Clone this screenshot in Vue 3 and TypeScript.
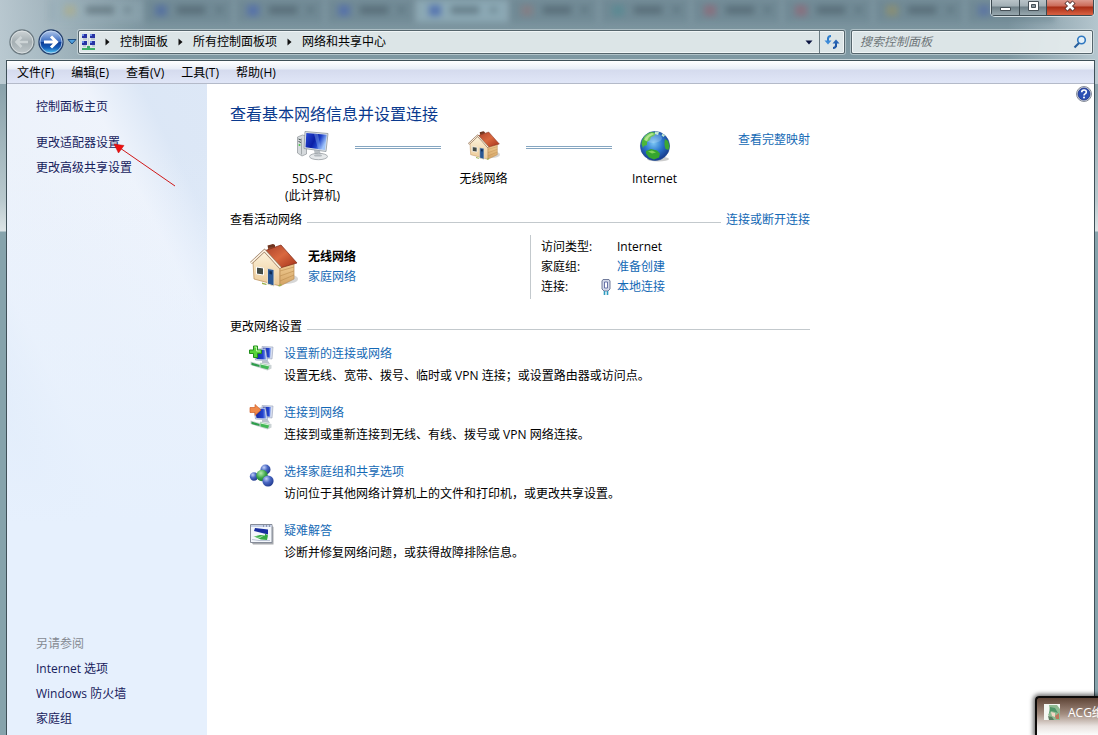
<script setup lang="ts">
interface Task {
  icon: string
  title: string
  text: string
}

const crumbs: string[] = ['控制面板', '所有控制面板项', '网络和共享中心']
const menus: string[] = ['文件(F)', '编辑(E)', '查看(V)', '工具(T)', '帮助(H)']
const related: string[] = ['Internet 选项', 'Windows 防火墙', '家庭组']
const tabTints: string[] = ['#b3ae82', '#4563a8', '#4563b8', '#4563b8', '#2f4fae', '#94797a', '#4f8a92', '#9b5e70', '#9b5e70', '#9a9360', '#5069ab']
const activeTab = 4

const tasks: Task[] = [
  { icon: 'i-new', title: '设置新的连接或网络', text: '设置无线、宽带、拨号、临时或 VPN 连接；或设置路由器或访问点。' },
  { icon: 'i-connect', title: '连接到网络', text: '连接到或重新连接到无线、有线、拨号或 VPN 网络连接。' },
  { icon: 'i-group', title: '选择家庭组和共享选项', text: '访问位于其他网络计算机上的文件和打印机，或更改共享设置。' },
  { icon: 'i-fix', title: '疑难解答', text: '诊断并修复网络问题，或获得故障排除信息。' },
]
</script>

<template>
  <div class="window">
    <svg class="defs" width="0" height="0" aria-hidden="true">
      <defs>
        <linearGradient id="g-roof" x1="0" y1="0" x2="1" y2="1">
          <stop offset="0" stop-color="#a8402a" />
          <stop offset="0.5" stop-color="#d9683f" />
          <stop offset="1" stop-color="#a33018" />
        </linearGradient>
        <linearGradient id="g-wall" x1="0" y1="0" x2="0" y2="1">
          <stop offset="0" stop-color="#fdf4de" />
          <stop offset="1" stop-color="#ecc995" />
        </linearGradient>
        <linearGradient id="g-side" x1="0" y1="0" x2="0" y2="1">
          <stop offset="0" stop-color="#f2cf96" />
          <stop offset="1" stop-color="#d3a263" />
        </linearGradient>
        <linearGradient id="g-screen" x1="0" y1="0" x2="1" y2="0.4">
          <stop offset="0" stop-color="#2a4ad6" />
          <stop offset="0.5" stop-color="#0b1fa6" />
          <stop offset="0.7" stop-color="#1e41c8" />
          <stop offset="1" stop-color="#9fc4fa" />
        </linearGradient>
        <linearGradient id="g-mini" x1="0" y1="0" x2="1" y2="0">
          <stop offset="0" stop-color="#14249a" />
          <stop offset="0.7" stop-color="#2443cf" />
          <stop offset="1" stop-color="#9fb8f2" />
        </linearGradient>
        <radialGradient id="g-sea" cx="0.45" cy="0.4" r="0.6">
          <stop offset="0" stop-color="#7cc6f4" />
          <stop offset="0.5" stop-color="#2d79cf" />
          <stop offset="1" stop-color="#173a8c" />
        </radialGradient>
        <radialGradient id="g-blue" cx="0.35" cy="0.3" r="0.7">
          <stop offset="0" stop-color="#c3d3f8" />
          <stop offset="0.5" stop-color="#4a68c4" />
          <stop offset="1" stop-color="#243e92" />
        </radialGradient>
        <radialGradient id="g-green" cx="0.4" cy="0.3" r="0.7">
          <stop offset="0" stop-color="#b9efb0" />
          <stop offset="0.6" stop-color="#3ba547" />
          <stop offset="1" stop-color="#1c7a33" />
        </radialGradient>
        <linearGradient id="g-back" x1="0" y1="0" x2="0" y2="1">
          <stop offset="0" stop-color="#d0d6d8" />
          <stop offset="0.5" stop-color="#a4aeb2" />
          <stop offset="1" stop-color="#c0c8cb" />
        </linearGradient>
        <linearGradient id="g-fwd" x1="0" y1="0" x2="0" y2="1">
          <stop offset="0" stop-color="#b9cdee" />
          <stop offset="0.48" stop-color="#3a6cc0" />
          <stop offset="0.5" stop-color="#0d3a93" />
          <stop offset="0.75" stop-color="#1560bb" />
          <stop offset="1" stop-color="#5fd8fb" />
        </linearGradient>
      </defs>

      <symbol id="i-house" viewBox="0 0 48 46">
        <ellipse cx="36" cy="36" rx="12" ry="5" fill="#000" opacity="0.16" />
        <path d="M18 3l5-1.500 2 1v8h-7z" fill="#9c5430" />
        <path d="M17.500 2.500l5.500-1.500 2 1v2l-7 1z" fill="#6e3521" />
        <path d="M3 19L15 8l15 16v19L4 36z" fill="url(#g-wall)" stroke="#b98d57" stroke-width="0.700" />
        <path d="M30 23l14-4v17l-14 7z" fill="url(#g-side)" stroke="#b98d57" stroke-width="0.700" />
        <path d="M30 28l14-4M30 33l14-5M30 38l14-6" stroke="#bb8c4e" stroke-width="0.600" />
        <path d="M14 8l17-6 16 18-17 5z" fill="url(#g-roof)" stroke="#7e2817" stroke-width="0.700" />
        <path d="M1 20L14.500 7.500 30.500 25" fill="none" stroke="#9c7d62" stroke-width="2.800" />
        <path d="M1 20L14.500 7.500 30.500 25" fill="none" stroke="#fff6e6" stroke-width="1.500" />
        <path d="M6.500 24l7 1v7l-7-1z" fill="#444b45" stroke="#fff" stroke-width="1" />
        <path d="M17.500 25.500l6.500 1V43l-6.500-2z" fill="#2a5794" stroke="#e9dcc3" stroke-width="1" />
        <path d="M19.500 28l2.500.4v3l-2.500-.4z" fill="#0f2c55" />
        <path d="M12 39.500l5 1.500-1 1-4-1zM28 42.500l3-1.500 1 1-3 1.500z" fill="#9bb14a" />
      </symbol>

      <symbol id="i-pc" viewBox="0 0 32 30">
        <path d="M0.500 6l5-2 4 1v18l-4.500 2-4.500-3z" fill="#d6dadd" stroke="#8e9498" stroke-width="0.700" />
        <path d="M4.500 7.500v16" stroke="#8c9396" stroke-width="0.700" />
        <path d="M1.500 8l2.500 1M1.500 10.500l2.500 1" stroke="#42504f" />
        <circle cx="2.500" cy="14" r="1" fill="#4bc44b" />
        <path d="M17 19l6 1 1 5h-6z" fill="#b9bfc3" />
        <path d="M8 0.500L31 2.500 29 20.500 7 17.500z" fill="#dfe4e9" stroke="#8d959d" stroke-width="0.800" />
        <path d="M9.300 2L29.800 3.700 28 19 8.500 16.200z" fill="url(#g-screen)" />
        <path d="M17 2.700l4 .3 3 15.400-3-.4z" fill="#8db4f6" opacity="0.4" />
        <ellipse cx="21.500" cy="25.500" rx="9" ry="3.200" fill="#e6e9eb" stroke="#979da2" stroke-width="0.800" />
        <ellipse cx="21" cy="24.400" rx="4" ry="1.200" fill="#b4babf" />
      </symbol>

      <symbol id="i-globe" viewBox="0 0 32 32">
        <ellipse cx="19" cy="29" rx="11" ry="2.500" fill="#000" opacity="0.2" />
        <circle cx="16" cy="16" r="14.600" fill="url(#g-sea)" stroke="#1d4a91" stroke-width="0.600" />
        <path d="M2.500 14C3 8 7 3 13 2l4 1-2 3-3 1-1 3-3 2 0 3-3 1-1 2z" fill="#4cb73a" />
        <path d="M5 10c2-4 5-6 8-7l2 1-5 3-2 4z" fill="#a1df72" />
        <path d="M7 21l5-2 6 1.500 3 3-1 4-5 2-5-2-3-4z" fill="#35a52f" />
        <path d="M9 21.500l4-1 4 2-4 1z" fill="#80d45a" />
        <path d="M26 9l3 2 1.500 5-1 4-3-1-1-4 0-3z" fill="#3ca833" />
        <path d="M16 1.500l4 .5-1 3-3-1zM23.500 3.500l2.500 2-1.500 1.500-2-1.500z" fill="#bfe6cf" />
        <ellipse cx="14" cy="8" rx="9" ry="5" fill="#fff" opacity="0.2" />
      </symbol>

      <symbol id="i-pair" viewBox="0 0 26 26">
        <path d="M13 1.500l11 .5-1 12-9-1z" fill="#d9e0f0" stroke="#95a0b8" stroke-width="0.600" />
        <path d="M14 2.700l8 .4-.8 9.600-7-.8z" fill="url(#g-mini)" />
        <path d="M5 4.500L16.500 3.500 18.500 15.500 6.500 15z" fill="#dfe5f2" stroke="#8290b2" stroke-width="0.600" />
        <path d="M6 5.500l9.700-1 1.600 10-9.800-.4z" fill="url(#g-mini)" />
        <path d="M13 15.500l6 .5 2 3-8-1z" fill="#b9c0cc" />
        <path d="M1.500 16.500l9 2.500 1-1.500 11 2.500v3.500l-4 2-8-2.500-9-3z" fill="#ccd3d5" />
        <path d="M2.500 17.500l8 2.500v2L2.500 20z" fill="#2e9d4c" />
        <path d="M11.500 18.500l9 2-1.500 4-7.500-2z" fill="#43b855" />
        <path d="M11.500 18.500l9 2v1l-9-2z" fill="#dff5e0" />
      </symbol>
      <symbol id="i-new" viewBox="0 0 26 26">
        <use href="#i-pair" />
        <path d="M4.500 1h4v4h4v3.500h-4v4h-4v-4h-4V5h4z" fill="#58d33a" stroke="#238f1d" />
        <path d="M5.500 2h2v4h4" fill="none" stroke="#c3f5aa" />
      </symbol>
      <symbol id="i-connect" viewBox="0 0 26 26">
        <use href="#i-pair" />
        <path d="M1 3.500h5V0.500l6 5.500-6 5.500V8.500H1z" fill="#f08a4b" stroke="#cf5f28" stroke-width="0.700" />
      </symbol>
      <symbol id="i-group" viewBox="0 0 26 26">
        <path d="M5 13l8-1 4-6M13 12l6 7" stroke="#a9b6cf" stroke-width="3" />
        <circle cx="5" cy="13.500" r="4.200" fill="url(#g-blue)" />
        <circle cx="16.500" cy="6.500" r="5" fill="url(#g-blue)" />
        <circle cx="13" cy="12.500" r="5.800" fill="url(#g-green)" />
        <circle cx="19" cy="18" r="5.600" fill="url(#g-blue)" />
      </symbol>
      <symbol id="i-fix" viewBox="0 0 26 26">
        <path d="M3 21h20V4l1.500 1v17.500H4z" fill="#a7aaae" />
        <path d="M1.500 2.500h21.500v18H1.500z" fill="#f4f7fc" stroke="#868c99" />
        <path d="M2 3h20.500v2H2z" fill="#c6d0e6" />
        <path d="M14 4h1M17 4h1M20 4h1" stroke="#56627f" />
        <path d="M6 6l13 1.500v5L13 11 5 9z" fill="#172da0" />
        <path d="M5 14.500l6-1.500 5 .5 0-2 3 2-1 4.500-6-.5z" fill="#36ab45" />
        <path d="M3 14l7 1 6-2-5 3z" fill="#a7e3a9" />
        <path d="M3 17.500l7 1h11" fill="none" stroke="#bcc5d6" />
      </symbol>
    </svg>

    <header class="glass">
      <div class="ghost-tabs" aria-hidden="true">
        <div v-for="(tint, i) in tabTints" :key="i" class="ghost-tab" :class="{ active: i === activeTab }">
          <span class="ghost-icon" :style="{ background: tint }"></span>
          <span class="ghost-text"></span>
          <span class="ghost-x"></span>
        </div>
      </div>

      <div class="controls">
        <button type="button" aria-label="最小化">
          <svg width="27" height="15" viewBox="0 0 27 15"><path d="M8.500 7.500h10v3h-10z" fill="#fff" stroke="#454f56" /></svg>
        </button>
        <button type="button" aria-label="最大化">
          <svg width="26" height="15" viewBox="0 0 26 15"><path d="M8.500 1.500h10v9h-10z" fill="#fff" stroke="#454f56" /><path d="M11.500 4.500h4v3h-4z" fill="#8b989f" stroke="#454f56" /></svg>
        </button>
        <button type="button" class="close" aria-label="关闭">
          <svg width="46" height="15" viewBox="0 0 46 15"><path d="M19 2l8 8M27 2l-8 8" stroke="#57332f" stroke-width="4.500" /><path d="M19.500 2.500l7 7M26.500 2.500l-7 7" stroke="#fff" stroke-width="2.600" /></svg>
        </button>
      </div>

      <div class="address-row">
        <div class="nav">
          <button type="button" class="round" aria-label="后退">
            <svg width="26" height="26" viewBox="0 0 26 26"><circle cx="13" cy="13" r="12" fill="url(#g-back)" stroke="#6d7b82" stroke-width="1.400" /><circle cx="13" cy="13" r="11" fill="none" stroke="#e2e7e9" stroke-width="0.800" /><path d="M19 13H8M12.500 8L7.500 13l5 5" fill="none" stroke="#cdd4d6" stroke-width="2.600" /></svg>
          </button>
          <button type="button" class="round" aria-label="前进">
            <svg width="26" height="26" viewBox="0 0 26 26"><circle cx="13" cy="13" r="12" fill="url(#g-fwd)" stroke="#28436f" stroke-width="1.400" /><circle cx="13" cy="13" r="11" fill="none" stroke="#c7daf1" stroke-width="0.800" /><path d="M6 13h11M13 7.500l5.500 5.500-5.500 5.500" fill="none" stroke="#fff" stroke-width="3" /></svg>
          </button>
          <button type="button" class="recent" aria-label="最近的页面">
            <svg width="10" height="8" viewBox="0 0 10 8"><path d="M1 1.500h8L5 6z" fill="#4fa0de" stroke="#1f4d80" /></svg>
          </button>
        </div>

        <div class="address">
          <svg class="crumb-icon" width="16" height="18" viewBox="0 0 16 18">
            <path d="M1 1h5v4H1zM9 1h5v4H9zM1 8h5v4H1zM9 8h5v4H9z" fill="#2733a4" />
            <path d="M1 1h2v2H1zM9 1h2v2H9zM1 8h2v2H1zM9 8h2v2H9z" fill="#6f8fe8" />
            <path d="M2 6h4M10 6h4M2 13h3M11 13h3" stroke="#9daac0" />
            <path d="M7.500 5v9" stroke="#cdd4da" />
            <path d="M6 13h3v2h5v2H1v-2h5z" fill="#3fae68" />
          </svg>
          <nav class="crumbs" aria-label="位置">
            <template v-for="crumb in crumbs" :key="crumb">
              <svg width="5" height="8" viewBox="0 0 5 8"><path d="M0.500 0.500L4.500 4l-4 3.500z" fill="#111" /></svg>
              <a href="#">{{ crumb }}</a>
            </template>
          </nav>
          <button type="button" class="drop" aria-label="以前的位置">
            <svg width="8" height="5" viewBox="0 0 8 5"><path d="M0.500 0.500h7L4 4.500z" fill="#0b1440" /></svg>
          </button>
          <button type="button" class="refresh" aria-label="刷新">
            <svg width="16" height="14" viewBox="0 0 16 14"><path d="M4 3v4M7 1Q4 1 4 4" fill="none" stroke="#2e7dcc" stroke-width="2" /><path d="M0.500 5.500h7L4 9.500z" fill="#3b8ad8" /><path d="M12 12V7M9 13q3 0 3-3" fill="none" stroke="#1f58a8" stroke-width="2" /><path d="M8.500 8.500h7L12 4.500z" fill="#2563b4" /></svg>
          </button>
        </div>

        <label class="search">
          <input type="text" placeholder="搜索控制面板" aria-label="搜索控制面板" />
          <svg width="14" height="14" viewBox="0 0 14 14"><circle cx="8.500" cy="5" r="3.800" fill="#e4f0f8" stroke="#2f78c0" stroke-width="1.600" /><path d="M6 8L1.500 12.500" stroke="#28609e" stroke-width="2.200" /></svg>
        </label>
      </div>
    </header>

    <div class="frame">
      <div class="menubar">
        <button v-for="menu in menus" :key="menu" type="button">{{ menu }}</button>
      </div>

      <div class="body">
        <aside class="sidebar">
          <a href="#" class="home">控制面板主页</a>
          <a href="#">更改适配器设置</a>
          <a href="#">更改高级共享设置</a>
          <svg class="pointer" width="64" height="46" viewBox="0 0 64 46" aria-hidden="true">
            <path d="M6 5l55 38" stroke="#d01818" stroke-width="1" />
            <path d="M0 1l10 1.500-5.500 7.500z" fill="#f00f0f" stroke="#b80d0d" stroke-width="0.500" />
          </svg>
          <h2>另请参阅</h2>
          <a v-for="item in related" :key="item" href="#">{{ item }}</a>
        </aside>

        <main class="main">
          <div class="content">
            <h1>查看基本网络信息并设置连接</h1>

            <div class="map">
              <div class="node">
                <svg width="32" height="32"><use href="#i-pc" /></svg>
                <span>5DS-PC</span>
                <span>(此计算机)</span>
              </div>
              <div class="wire"></div>
              <div class="node">
                <svg width="32" height="32"><use href="#i-house" /></svg>
                <span>无线网络</span>
              </div>
              <div class="wire"></div>
              <div class="node">
                <svg width="32" height="32"><use href="#i-globe" /></svg>
                <span>Internet</span>
              </div>
              <a href="#" class="full-map">查看完整映射</a>
            </div>

            <div class="section">
              <h2>查看活动网络</h2>
              <hr />
              <a href="#">连接或断开连接</a>
            </div>

            <div class="active-network">
              <svg class="network-icon" width="48" height="46"><use href="#i-house" /></svg>
              <div class="network-name">
                <strong>无线网络</strong>
                <a href="#">家庭网络</a>
              </div>
              <dl>
                <dt>访问类型:</dt>
                <dd>Internet</dd>
                <dt>家庭组:</dt>
                <dd><a href="#">准备创建</a></dd>
                <dt>
                  连接:
                  <svg width="10" height="16" viewBox="0 0 10 16"><path d="M2 0.500h6l1 1.500v8l-2 2H3l-2-2V2z" fill="#d3d9e9" stroke="#707b9b" /><path d="M3.500 3v6h3V3z" fill="#fff" stroke="#5a67a0" stroke-width="0.900" /><path d="M3.500 12v4M6.500 12v4" stroke="#2f9cc0" stroke-width="1.600" /></svg>
                </dt>
                <dd><a href="#">本地连接</a></dd>
              </dl>
            </div>

            <div class="section settings">
              <h2>更改网络设置</h2>
              <hr />
            </div>

            <ul class="tasks">
              <li v-for="task in tasks" :key="task.title">
                <svg width="26" height="26"><use :href="'#' + task.icon" /></svg>
                <div>
                  <a href="#">{{ task.title }}</a>
                  <p>{{ task.text }}</p>
                </div>
              </li>
            </ul>
          </div>

          <button type="button" class="help" aria-label="帮助">
            <svg width="16" height="16" viewBox="0 0 16 16"><circle cx="8" cy="8" r="7.500" fill="#d9dde6" stroke="#7c828f" stroke-width="0.900" /><circle cx="8" cy="8" r="6" fill="#2c4fb4" stroke="#1b2f80" stroke-width="0.800" /><path d="M5.700 6.300Q5.700 4 8 4t2.300 2Q10.300 7.200 9 7.900 8 8.500 8 9.500" fill="none" stroke="#fff" stroke-width="1.600" /><circle cx="8" cy="11.600" r="1" fill="#fff" /></svg>
          </button>
        </main>
      </div>
    </div>

    <div class="toast">
      <svg width="16" height="16" viewBox="0 0 16 16"><path d="M0 0h16v16H0z" fill="#f4f7f2" /><path d="M5 1l8 0 3 4v11H9l-5-5 2-4z" fill="#8fba92" /><path d="M6 3l5 1 3 5-3-1-4-1-2 3z" fill="#4e9668" /><path d="M7 8l4 1 0 4-3-1z" fill="#f2d7c4" /><path d="M11 12l4-3v6h-3z" fill="#bf765d" /><path d="M4 12l4 1 2 3H5z" fill="#5b7c60" /></svg>
      <span>ACG绝</span>
    </div>
  </div>
</template>

<style>
html,
body {
  margin: 0;
  background: #8aa5ad;
}
</style>

<style scoped>
.window {
  position: relative;
  box-sizing: border-box;
  display: flex;
  flex-direction: column;
  min-height: 100vh;
  overflow: hidden;
  padding: 0 3px 0 6px;
  background:
    linear-gradient(90deg, rgba(205, 217, 224, 0.75), rgba(190, 206, 213, 0) 150px) 0 0 / 100% 84px no-repeat,
    linear-gradient(270deg, rgba(205, 219, 226, 0.7), rgba(205, 219, 226, 0) 90px) 0 0 / 100% 84px no-repeat,
    linear-gradient(180deg, #78909b 0, #7f99a3 60px, #b9c9ce 200px, #dce4e6 231px, #86a3ac 232px);
  font: 12px/18px "Open Sans", "Noto Sans CJK SC", sans-serif;
  color: #000;
}

.defs {
  position: absolute;
}

a {
  color: #1469b5;
  text-decoration: none;
}

button {
  padding: 0;
  border: 0;
  background: none;
  font: inherit;
  color: inherit;
}

button svg {
  display: block;
}

h1,
h2,
p,
dl,
dd,
ul {
  margin: 0;
  padding: 0;
  font-weight: 400;
}

.glass {
  position: relative;
  display: flex;
  flex-direction: column;
}

.ghost-tabs {
  display: flex;
  height: 22px;
  margin: 0 40px 8px 44px;
  filter: blur(3px);
}

.ghost-tab {
  flex: 1;
  display: flex;
  align-items: center;
  gap: 10px;
  box-sizing: border-box;
  padding: 0 10px 2px 12px;
  border-left: 2px solid #8fa6b0;
  background: rgba(104, 130, 142, 0.5);
}

.ghost-tab:first-child {
  background: rgba(150, 174, 186, 0.4);
}

.ghost-tab.active {
  background: #8ba8b4;
}

.ghost-icon {
  width: 12px;
  height: 11px;
  opacity: 0.55;
}

.ghost-text {
  width: 28px;
  height: 8px;
  background: #40525c;
  opacity: 0.45;
}

.ghost-x {
  width: 7px;
  height: 6px;
  margin-left: auto;
  background: #40525c;
  opacity: 0.3;
}

.controls {
  position: absolute;
  top: 0;
  right: 0;
  display: flex;
  border: 1px solid #d6e0e4;
  border-top: 0;
  border-radius: 0 0 5px 5px;
  overflow: hidden;
}

.controls button {
  border-right: 1px solid #3d4a51;
  border-bottom: 1px solid #3d4a51;
  background: linear-gradient(180deg, #b9c3c8 0, #a2afb5 6px, #6e7f87 7px, #93a3aa 14px);
}

.controls button:first-child {
  border-left: 1px solid #3d4a51;
}

.controls .close {
  background: linear-gradient(180deg, #dd9a8e 0, #cb6a58 6px, #a82c15 7px, #d45c3e 14px);
}

.address-row {
  display: flex;
  align-items: center;
  height: 24px;
  margin-bottom: 6px;
  padding: 0 2px 0 3px;
}

.nav {
  display: flex;
  align-items: center;
  gap: 3px;
  width: 69px;
}

.round {
  border-radius: 50%;
}

.address,
.search {
  box-sizing: border-box;
  display: flex;
  align-items: center;
  height: 24px;
  border: 1px solid #56666d;
  border-radius: 2px;
  background: rgba(231, 237, 238, 0.9);
  box-shadow: inset 0 0 0 1px #f0f5f6, 0 0 0 1px rgba(226, 235, 238, 0.5);
}

.address {
  flex: 1;
  padding-left: 2px;
}

.crumb-icon {
  margin-right: 8px;
}

.crumbs {
  flex: 1;
  display: flex;
  align-items: center;
  gap: 10px;
}

.crumbs a {
  color: #000;
}

.drop {
  padding: 8px 6px;
}

.refresh {
  padding: 4px;
  border-left: 1px solid #6b7b83;
}

.search {
  width: 242px;
  margin-left: 6px;
  padding: 0 5px 0 8px;
}

.search input {
  flex: 1;
  min-width: 0;
  padding: 0;
  border: 0;
  outline: 0;
  background: none;
  font: inherit;
  font-style: italic;
}

.search input::placeholder {
  color: #6e7679;
}

.frame {
  flex: 1;
  display: flex;
  flex-direction: column;
  border: 1px solid #3f5058;
  border-bottom: 0;
  background: #fff;
  box-shadow: 0 -1px 0 #c7d4d9;
}

.menubar {
  display: flex;
  gap: 1px;
  height: 22px;
  padding-left: 2px;
  border-bottom: 1px solid #b4bac9;
  background: linear-gradient(180deg, #fff 0, #e9eef7 8px, #d5dbee 9px, #e0e6f7 22px);
}

.menubar button {
  padding: 2px 8px 0;
}

.body {
  flex: 1;
  display: flex;
}

.sidebar {
  position: relative;
  box-sizing: border-box;
  flex: none;
  display: flex;
  flex-direction: column;
  align-items: flex-start;
  gap: 7px;
  width: 200px;
  padding: 14px 0 7px 29px;
  background:
    linear-gradient(180deg, rgba(230, 240, 253, 0) 60px, #e6f0fd 440px),
    linear-gradient(243deg, rgba(220, 231, 246, 0.9) 0, rgba(217, 229, 245, 0.8) 60px, rgba(241, 245, 252, 0.8) 110px, rgba(238, 243, 251, 0.8) 200px, rgba(240, 245, 252, 0.6) 270px, rgba(219, 231, 246, 0.9) 330px),
    #e6eefa;
}

.sidebar a {
  color: #16215c;
}

.sidebar .home {
  margin-bottom: 11px;
}

.sidebar h2 {
  margin-top: auto;
  font-size: 12px;
  line-height: 18px;
  color: #858a92;
}

.pointer {
  position: absolute;
  top: 59px;
  left: 107px;
}

.main {
  position: relative;
  flex: 1;
  padding: 20px 23px;
}

.content {
  max-width: 580px;
}

h1 {
  font-size: 16px;
  line-height: 20px;
  color: #0a3a8e;
}

.map {
  display: flex;
  margin-top: 6px;
  padding-left: 40px;
  line-height: 17px;
}

.node {
  display: flex;
  flex-direction: column;
  align-items: center;
  width: 85px;
  min-height: 74px;
}

.node svg {
  margin-bottom: 8px;
}

.wire {
  width: 86px;
  height: 1px;
  margin-top: 16px;
  border: solid #86a6c1;
  border-width: 1px 0;
}

.full-map {
  margin: 1px 0 0 auto;
}

.section {
  display: flex;
  align-items: center;
  gap: 5px;
  margin-top: 7px;
}

.section h2 {
  font-size: 12px;
  line-height: 18px;
}

.section hr {
  flex: 1;
  height: 1px;
  margin: 4px 0 0;
  border: 0;
  background: #c3c9cd;
}

.active-network {
  display: flex;
  height: 64px;
  margin-top: 6px;
  padding-left: 20px;
  line-height: 20px;
}

.network-icon {
  margin-top: 8px;
}

.network-name {
  flex: 1;
  display: flex;
  flex-direction: column;
  padding: 12px 0 0 10px;
}

.network-name strong {
  font-weight: 700;
}

dl {
  display: grid;
  box-sizing: border-box;
  grid-template-columns: 76px 1fr;
  grid-auto-rows: 20px;
  width: 280px;
  padding: 2px 0 0 10px;
  border-left: 1px solid #c3c9cd;
}

dt {
  display: flex;
  align-items: center;
  justify-content: space-between;
  padding-right: 6px;
}

.settings {
  margin-top: 19px;
}

.tasks {
  display: flex;
  flex-direction: column;
  gap: 19px;
  margin-top: 9px;
  padding-left: 19px;
  list-style: none;
}

.tasks li {
  display: flex;
  gap: 9px;
}

.tasks a {
  display: block;
  width: max-content;
}

.tasks p {
  margin-top: 4px;
}

.help {
  position: absolute;
  top: 2px;
  right: 2px;
}

.toast {
  position: absolute;
  right: 0;
  bottom: 0;
  box-sizing: border-box;
  display: flex;
  gap: 8px;
  width: 63px;
  height: 39px;
  padding: 6px 0 0 7px;
  overflow: hidden;
  border: solid #0d0b0a;
  border-width: 2px 0 0 2px;
  border-radius: 4px 0 0 0;
  background: linear-gradient(180deg, #5e4436 0, #a38d80 16px, #e8e2df 28px, #fff 38px);
  box-shadow: 0 0 4px 2px rgba(0, 0, 0, 0.55);
  color: #fff;
  white-space: nowrap;
}

.toast svg {
  flex: none;
}
</style>
